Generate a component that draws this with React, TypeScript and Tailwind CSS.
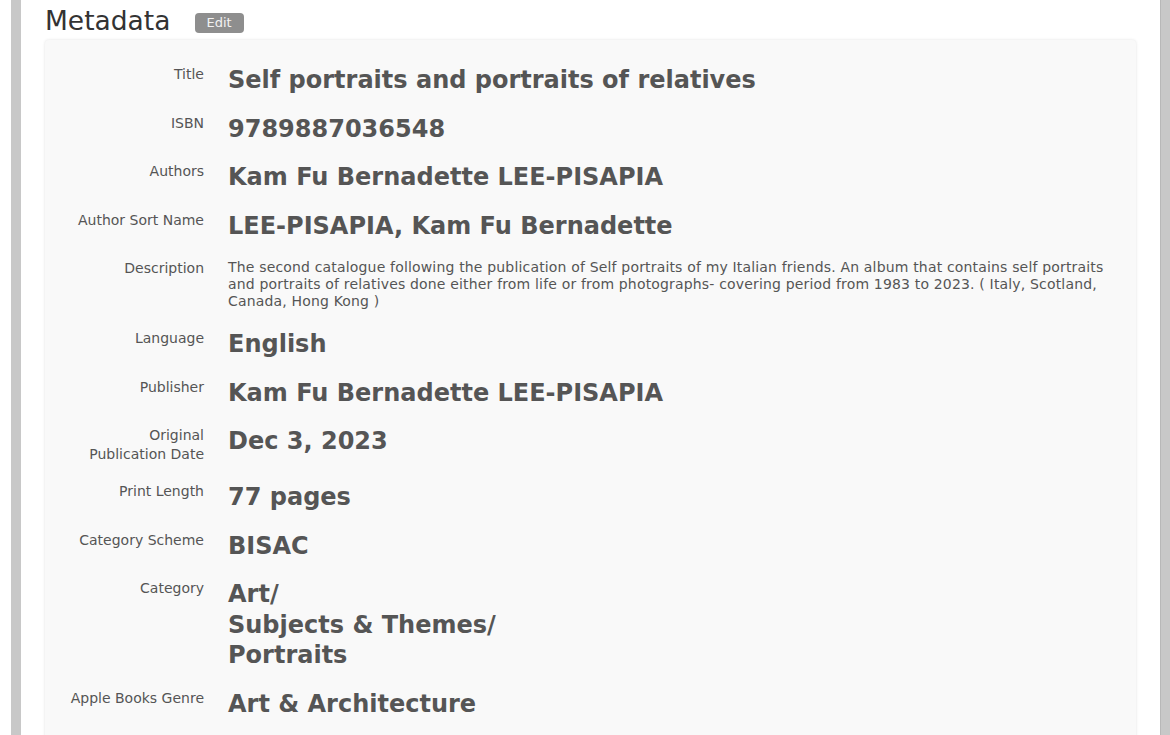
import React from "react";

type Row = {
  label: string[];
  value: string[];
  small?: boolean;
};

const rows: Row[] = [
  { label: ["Title"], value: ["Self portraits and portraits of relatives"] },
  { label: ["ISBN"], value: ["9789887036548"] },
  { label: ["Authors"], value: ["Kam Fu Bernadette LEE-PISAPIA"] },
  { label: ["Author Sort Name"], value: ["LEE-PISAPIA, Kam Fu Bernadette"] },
  {
    label: ["Description"],
    value: [
      "The second catalogue following the publication of Self portraits of my Italian friends. An album that contains self portraits and portraits of relatives done either from life or from photographs- covering period from 1983 to 2023. ( Italy, Scotland, Canada, Hong Kong )",
    ],
    small: true,
  },
  { label: ["Language"], value: ["English"] },
  { label: ["Publisher"], value: ["Kam Fu Bernadette LEE-PISAPIA"] },
  { label: ["Original", "Publication Date"], value: ["Dec 3, 2023"] },
  { label: ["Print Length"], value: ["77 pages"] },
  { label: ["Category Scheme"], value: ["BISAC"] },
  { label: ["Category"], value: ["Art/", "Subjects & Themes/", "Portraits"] },
  { label: ["Apple Books Genre"], value: ["Art & Architecture"] },
];

function MetaRow({ row }: { row: Row }) {
  return (
    <div className={`flex items-start gap-6 ${row.small ? "pt-[9px] pb-[10px]" : "py-[9px]"}`}>
      <div className="w-[159px] shrink-0 text-right text-[14px] leading-[19px] text-[#555]">
        {row.label.map((l) => (
          <div key={l}>{l}</div>
        ))}
      </div>
      {row.small ? (
        <p className="flex-1 pr-[31px] text-[14px] leading-[17px] tracking-[0.17px] text-[#555]">{row.value[0]}</p>
      ) : (
        <div className="flex-1 text-[24px] font-bold leading-[30.5px] text-[#555]">
          {row.value.map((v) => (
            <div key={v}>{v}</div>
          ))}
        </div>
      )}
    </div>
  );
}

export default function App() {
  return (
    <div className="flex min-h-[735px] bg-white" style={{ fontFamily: '"DejaVu Sans", Verdana, sans-serif' }}>
      <div className="w-[11px] shrink-0" />
      <div className="w-[10px] shrink-0 bg-[#c8c8c8]" />
      <div className="flex-1 pl-[24px] pr-[24px]">
        <div className="flex h-[40px] items-center gap-6">
          <h1 className="pt-[2px] text-[26.5px] leading-[40px] text-[#333]">Metadata</h1>
          <span className="mt-[6px] rounded-[4px] bg-[#8e8e8e] px-[12px] text-[13px] leading-[20px] text-[#f2f2f2]">
            Edit
          </span>
        </div>
        <div className="rounded-[4px] bg-[#f9f9f9] pt-[16px] pb-[20px] shadow-[0_0_3px_rgba(0,0,0,0.12)]">
          {rows.map((r) => (
            <MetaRow key={r.label.join(" ")} row={r} />
          ))}
        </div>
      </div>
      <div className="w-[10px] shrink-0 border-l border-[#b8b8b8] bg-[#c8c8c8]" />
    </div>
  );
}
